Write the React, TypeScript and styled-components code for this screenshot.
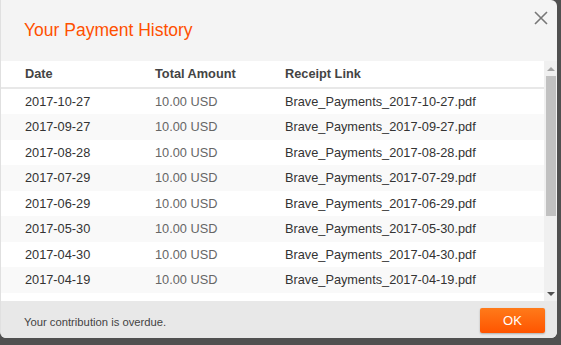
import styled, { createGlobalStyle } from "styled-components";

const GlobalStyle = createGlobalStyle`
  html, body {
    margin: 0;
    padding: 0;
    width: 561px;
    height: 345px;
    overflow: hidden;
    background: #4a4a4a;
    font-family: "Liberation Sans", Arial, sans-serif;
  }
`;

const Backdrop = styled.div`
  width: 561px;
  height: 345px;
  background: #505050;
`;

const Modal = styled.div`
  width: 557px;
  height: 338px;
  background: #f4f4f4;
  border-radius: 0 6px 6px 6px;
  display: flex;
  flex-direction: column;
  overflow: hidden;
  box-sizing: border-box;
  border-left: 1px solid #e0e0e0;
`;

const Header = styled.div`
  height: 61px;
  flex-shrink: 0;
  display: flex;
  align-items: flex-start;
  justify-content: space-between;
  padding: 0 7px 0 23px;
`;

const Title = styled.h1`
  margin: 20px 0 0;
  font-size: 17.5px;
  font-weight: normal;
  color: #ff5000;
`;

const Close = styled.button`
  margin-top: 9px;
  width: 18px;
  height: 18px;
  padding: 0;
  border: none;
  background: none;
  cursor: pointer;
  display: flex;
  align-items: center;
  justify-content: center;
`;

const Body = styled.div`
  height: 240px;
  flex-shrink: 0;
  display: flex;
  background: #fff;
`;

const List = styled.div`
  flex: 1;
  overflow: hidden;
`;

const ScrollBar = styled.div`
  width: 13px;
  display: flex;
  flex-direction: column;
  background: #f0f0f0;
`;

const Arrow = styled.div<{ $down?: boolean }>`
  height: 15px;
  display: flex;
  align-items: center;
  justify-content: center;
  &::before {
    content: "";
    border-left: 4px solid transparent;
    border-right: 4px solid transparent;
    ${(p) =>
      p.$down
        ? "border-top: 4px solid #505050;"
        : "border-bottom: 4px solid #a3a3a3;"}
  }
`;

const Track = styled.div`
  flex: 1;
  padding: 0 1px 0 2px;
`;

const Thumb = styled.div`
  height: 140px;
  background: #c1c1c1;
`;

const Table = styled.table`
  width: 100%;
  border-collapse: collapse;
  font-size: 12.75px;
`;

const HeadCell = styled.th`
  text-align: left;
  font-weight: bold;
  color: #444;
  padding: 3px 0 3px 24px;
  line-height: 19.5px;
  width: 106px;
  border-bottom: 2px solid #e8e8e8;
  &:last-child {
    width: auto;
  }
`;

const Row = styled.tr<{ $odd: boolean }>`
  background: ${(p) => (p.$odd ? "#f9f9f9" : "#fff")};
`;

const Cell = styled.td<{ $muted?: boolean }>`
  padding: 3px 0 3px 24px;
  line-height: 19.5px;
  color: ${(p) => (p.$muted ? "#666" : "#333")};
  white-space: nowrap;
`;

const Footer = styled.div`
  flex: 1;
  background: #e8e8e8;
  display: flex;
  align-items: center;
  justify-content: space-between;
  padding: 0 12px 0 23px;
`;

const Note = styled.span`
  font-size: 11.25px;
  color: #444;
  margin-top: 5px;
`;

const OkButton = styled.button`
  width: 65px;
  height: 25px;
  margin-top: 1px;
  border: none;
  border-radius: 2px;
  background: linear-gradient(#ff7a1a, #ff5500);
  box-shadow: 0 1px 2px rgba(0, 0, 0, 0.25);
  color: #fff;
  font-family: "Liberation Sans", Arial, sans-serif;
  font-size: 13px;
  cursor: pointer;
`;

const dates = [
  "2017-10-27",
  "2017-09-27",
  "2017-08-28",
  "2017-07-29",
  "2017-06-29",
  "2017-05-30",
  "2017-04-30",
  "2017-04-19",
];

const App = () => {
  return (
    <>
      <GlobalStyle />
      <Backdrop>
        <Modal>
          <Header>
            <Title>Your Payment History</Title>
            <Close aria-label="close">
              <svg width="14" height="14" viewBox="0 0 14 14">
                <path d="M1 1L13 13M13 1L1 13" stroke="#777" strokeWidth="1.6" />
              </svg>
            </Close>
          </Header>
          <Body>
            <List>
              <Table>
                <thead>
                  <tr>
                    <HeadCell>Date</HeadCell>
                    <HeadCell>Total Amount</HeadCell>
                    <HeadCell>Receipt Link</HeadCell>
                  </tr>
                </thead>
                <tbody>
                  {dates.map((d, i) => (
                    <Row key={d} $odd={i % 2 === 1}>
                      <Cell>{d}</Cell>
                      <Cell $muted>10.00 USD</Cell>
                      <Cell>Brave_Payments_{d}.pdf</Cell>
                    </Row>
                  ))}
                </tbody>
              </Table>
            </List>
            <ScrollBar>
              <Arrow />
              <Track>
                <Thumb />
              </Track>
              <Arrow $down />
            </ScrollBar>
          </Body>
          <Footer>
            <Note>Your contribution is overdue.</Note>
            <OkButton>OK</OkButton>
          </Footer>
        </Modal>
      </Backdrop>
    </>
  );
};

export default App;
